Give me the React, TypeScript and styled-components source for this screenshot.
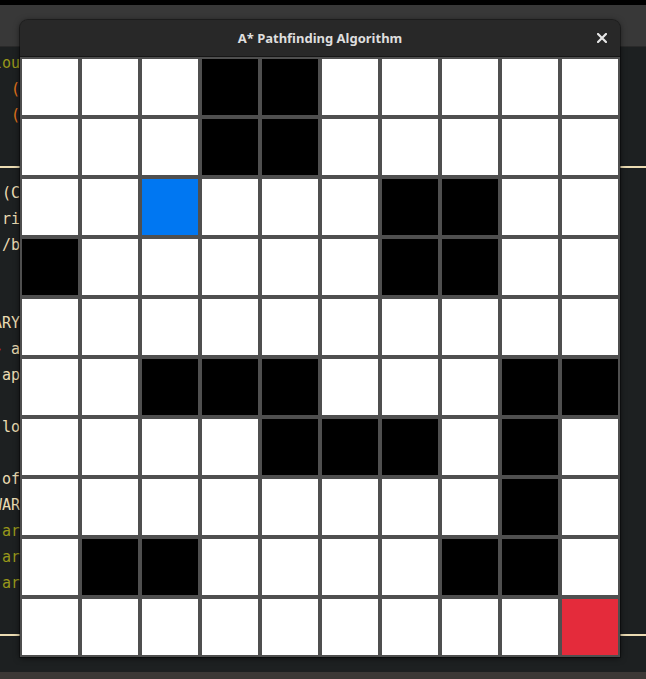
import React from 'react';
import styled, { createGlobalStyle } from 'styled-components';

const GlobalStyle = createGlobalStyle`
  html, body {
    margin: 0;
    padding: 0;
    background: #1d2021;
    overflow: hidden;
  }
`;

type Tone = 'cream' | 'green' | 'orange' | 'red';

const tones: Record<Tone, string> = {
  cream: '#ebdbb2',
  green: '#98971a',
  orange: '#e2731a',
  red: '#cc241d',
};

type Segment = { text: string; tone: Tone };
type TermLine = Segment[] | 'rule' | null;

const termLines: TermLine[] = [
  [{ text: 'lout', tone: 'green' }],
  [{ text: '  (', tone: 'orange' }],
  [{ text: '  (', tone: 'orange' }],
  null,
  'rule',
  [{ text: ' (C', tone: 'cream' }],
  [{ text: ' ri', tone: 'cream' }],
  [{ text: ' /b', tone: 'cream' }],
  null,
  null,
  [{ text: 'ARY', tone: 'cream' }],
  [{ text: '❯', tone: 'red' }, { text: ' a', tone: 'cream' }],
  [{ text: ' ap', tone: 'cream' }],
  null,
  [{ text: ' lo', tone: 'cream' }],
  null,
  [{ text: ' of', tone: 'cream' }],
  [{ text: 'WAR', tone: 'cream' }],
  [{ text: ' ar', tone: 'green' }],
  [{ text: ' ar', tone: 'green' }],
  [{ text: ' ar', tone: 'green' }],
  null,
  'rule',
];

type Cell = 'W' | 'B' | 'S' | 'E';

const gridMap: string[] = [
  'WWWBBWWWWW',
  'WWWBBWWWWW',
  'WWSWWWBBWW',
  'BWWWWWBBWW',
  'WWWWWWWWWW',
  'WWBBBWWWBB',
  'WWWWBBBWBW',
  'WWWWWWWWBW',
  'WBBWWWWBBW',
  'WWWWWWWWWE',
];

const cellColors: Record<Cell, string> = {
  W: '#ffffff',
  B: '#000000',
  S: '#0077f2',
  E: '#e42b3b',
};

const Desktop = styled.div`
  position: relative;
  width: 646px;
  height: 679px;
  display: flex;
  flex-direction: column;
  background: #1d2021;
  overflow: hidden;
`;

const TopStrip = styled.div`
  height: 5px;
  background: #000000;
`;

const TermHeader = styled.div`
  height: 41px;
  background: #383838;
  border-bottom: 1px solid #2a2a2a;
`;

const Terminal = styled.div`
  flex: 1;
  padding-top: 3px;
  font-family: 'DejaVu Sans Mono', monospace;
  font-size: 15px;
  white-space: pre;
`;

const Line = styled.div`
  height: 26px;
  line-height: 26px;
  margin-left: -7px;
`;

const Rule = styled.div`
  height: 26px;
  display: flex;
  align-items: center;
  &::after {
    content: '';
    flex: 1;
    height: 2px;
    background: #ebdbb2;
  }
`;

const Span = styled.span<{ $tone: Tone }>`
  color: ${(p) => tones[p.$tone]};
`;

const BottomStrip = styled.div`
  height: 7px;
  background: #3c3836;
`;

const Window = styled.div`
  position: absolute;
  left: 20px;
  top: 20px;
  width: 600px;
  display: flex;
  flex-direction: column;
  border-radius: 8px 8px 0 0;
  background: #282828;
  box-shadow: 0 1px 6px rgba(0, 0, 0, 0.6), 0 0 0 1px rgba(0, 0, 0, 0.35);
  overflow: hidden;
`;

const TitleBar = styled.div`
  position: relative;
  height: 36px;
  display: flex;
  align-items: center;
  justify-content: center;
  background: #282828;
  border-bottom: 1px solid #161616;
`;

const Title = styled.span`
  font-family: 'Noto Sans', 'DejaVu Sans', sans-serif;
  font-weight: 700;
  font-size: 13px;
  color: #dedede;
`;

const CloseButton = styled.button`
  position: absolute;
  right: 12px;
  top: 12px;
  width: 12px;
  height: 12px;
  padding: 0;
  border: 0;
  background: transparent;
  display: flex;
  align-items: center;
  justify-content: center;
`;

const Board = styled.div`
  display: grid;
  grid-template-columns: repeat(10, 56px);
  grid-auto-rows: 56px;
  gap: 4px;
  padding: 2px;
  background: #4f4f4f;
`;

const Square = styled.div<{ $kind: Cell }>`
  background: ${(p) => cellColors[p.$kind]};
`;

export default function App() {
  return (
    <>
      <GlobalStyle />
      <Desktop>
        <TopStrip />
        <TermHeader />
        <Terminal>
          {termLines.map((line, i) =>
            line === 'rule' ? (
              <Rule key={i} />
            ) : (
              <Line key={i}>
                {line
                  ? line.map((seg, j) => (
                      <Span key={j} $tone={seg.tone}>
                        {seg.text}
                      </Span>
                    ))
                  : ' '}
              </Line>
            )
          )}
        </Terminal>
        <BottomStrip />

        <Window>
          <TitleBar>
            <Title>A* Pathfinding Algorithm</Title>
            <CloseButton aria-label="Close">
              <svg width="10" height="10" viewBox="0 0 10 10">
                <path d="M1 1 L9 9 M9 1 L1 9" stroke="#e6e6e6" strokeWidth="2.2" strokeLinecap="square" />
              </svg>
            </CloseButton>
          </TitleBar>
          <Board>
            {gridMap.flatMap((row, r) =>
              row.split('').map((c, col) => <Square key={`${r}-${col}`} $kind={c as Cell} />)
            )}
          </Board>
        </Window>
      </Desktop>
    </>
  );
}
